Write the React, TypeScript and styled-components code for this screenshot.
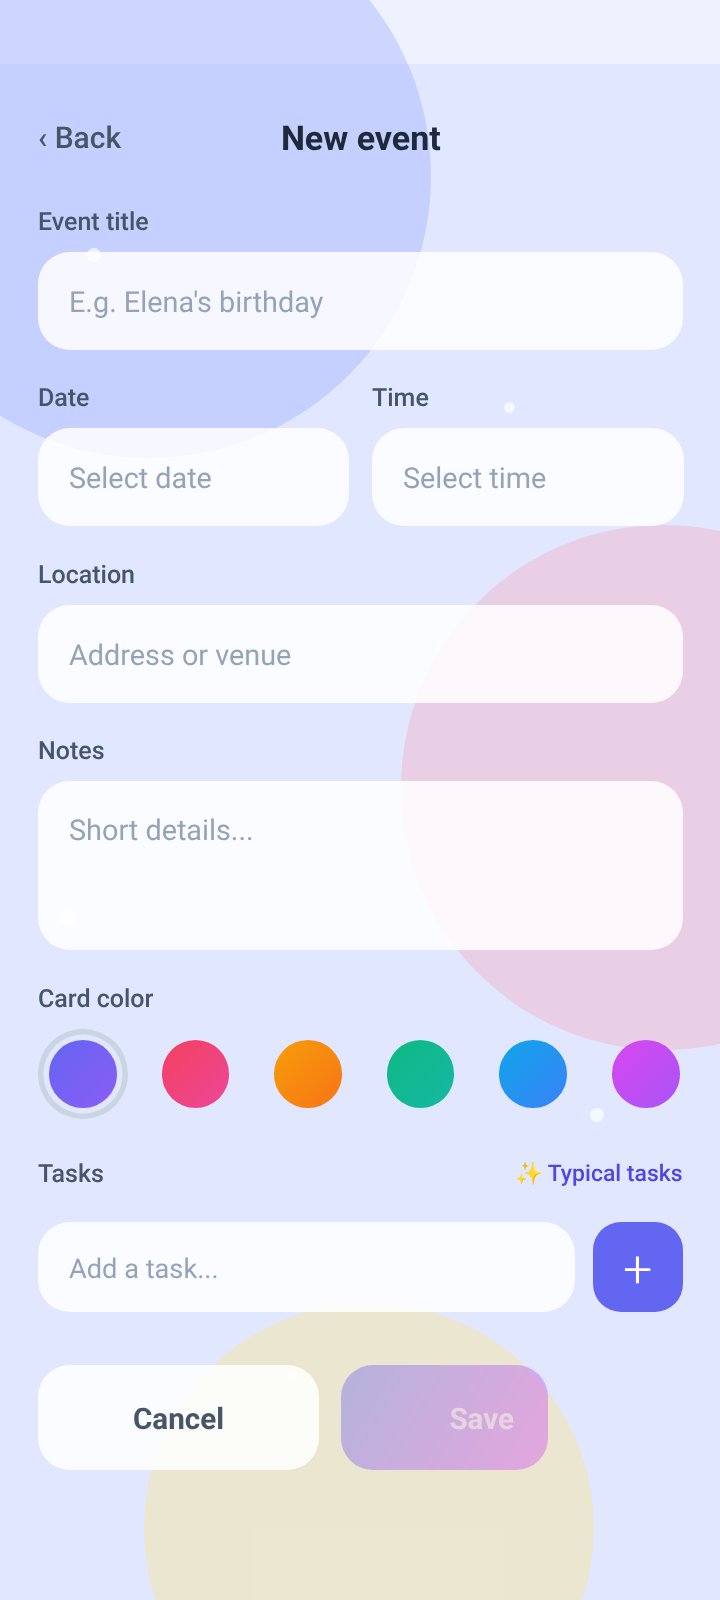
import React from "react";
import styled, { createGlobalStyle } from "styled-components";

const GlobalStyle = createGlobalStyle`
  * { box-sizing: border-box; }
  html, body { margin: 0; padding: 0; }
  body {
    font-family: Roboto, "Noto Sans", sans-serif;
    background: #e0e7ff;
    text-rendering: geometricPrecision;
  }
  button, input, textarea { text-rendering: geometricPrecision; }
`;

const Page = styled.div`
  position: relative;
  width: 720px;
  height: 1600px;
  overflow: hidden;
  background: #e0e7ff;
`;

const Blob = styled.div<{ $size: number; $left: number; $top: number; $color?: string }>`
  position: absolute;
  left: ${(p) => p.$left}px;
  top: ${(p) => p.$top}px;
  width: ${(p) => p.$size}px;
  height: ${(p) => p.$size}px;
  border-radius: 50%;
  background: ${(p) => p.$color};
`;

const Sparkle = styled(Blob)`
  background: rgba(255, 255, 255, 0.7);
  z-index: 2;
`;

const StatusBar = styled.div`
  height: 64px;
  background: rgba(255, 255, 255, 0.45);
`;

const Content = styled.div`
  position: relative;
  padding: 0 37.4px 0 38px;
  will-change: transform;
`;

const Header = styled.header`
  position: relative;
  height: 141px;
  display: flex;
  align-items: center;
  justify-content: center;
  padding: 8px 0 0 1px;
`;

const BackButton = styled.button`
  position: absolute;
  left: 0;
  top: 50%;
  transform: translateY(-50%);
  margin-top: 3px;
  padding: 0;
  border: 0;
  background: none;
  color: #475569;
  font: 500 30px Roboto, sans-serif;
`;

const Title = styled.h1`
  margin: 0;
  color: #1e293b;
  font: 700 34px Roboto, sans-serif;
`;

const Field = styled.div<{ $gap?: number }>`
  margin-bottom: ${(p) => p.$gap ?? 32}px;
`;

const Label = styled.label`
  display: block;
  height: 32px;
  margin-bottom: 15px;
  color: #475569;
  font: 500 25px/35px Roboto, sans-serif;
`;

const TextInput = styled.input`
  display: block;
  width: 100%;
  height: 98px;
  padding: 4px 31px 0;
  border: 0;
  border-radius: 32px;
  background: rgba(255, 255, 255, 0.85);
  color: #1e293b;
  font: 400 28.8px Roboto, sans-serif;
  outline: none;
  &::placeholder { color: #94a3b8; opacity: 1; }
`;

const NotesInput = styled.textarea`
  display: block;
  width: 100%;
  height: 169.6px;
  padding: 33px 31px;
  border: 0;
  border-radius: 32px;
  background: rgba(255, 255, 255, 0.85);
  font: 400 28.8px/34px Roboto, sans-serif;
  resize: none;
  outline: none;
  &::placeholder { color: #94a3b8; opacity: 1; }
`;

const TwoCols = styled.div`
  display: grid;
  grid-template-columns: 311px 312px;
  column-gap: 23px;
  width: 646px;
`;

const Swatches = styled.div`
  display: flex;
  gap: 45px;
  padding: 11px;
  margin-bottom: 38px;
`;

const Swatch = styled.button<{ $from: string; $to: string; $active?: boolean }>`
  flex: none;
  width: 67.6px;
  height: 67.6px;
  padding: 0;
  border: 0;
  border-radius: 50%;
  background: linear-gradient(135deg, ${(p) => p.$from}, ${(p) => p.$to});
  box-shadow: ${(p) => (p.$active ? "0 0 0 5.6px #e0e7ff, 0 0 0 11px #cbd5e1" : "none")};
`;

const TasksHead = styled.div`
  display: flex;
  justify-content: space-between;
  align-items: center;
  height: 32px;
  margin-bottom: 33px;
`;

const TasksLabel = styled(Label)`
  margin: 0;
`;

const TypicalLink = styled.a`
  padding-top: 3px;
  color: #4f46e5;
  font: 500 23px/32px Roboto, "Noto Color Emoji", sans-serif;
`;

const Emoji = styled.span`
  margin-right: 4.5px;
  font-size: 22.5px;
`;

const TaskRow = styled.div`
  display: flex;
  gap: 18px;
  margin-bottom: 53px;
`;

const TaskInput = styled(TextInput)`
  flex: 1;
  height: 90px;
  font-size: 27.2px;
`;

const AddButton = styled.button`
  flex: none;
  width: 90px;
  height: 90px;
  padding: 6px 0 0;
  border: 0;
  border-radius: 28px;
  background: #6366f1;
  color: #fff;
  font: 300 52px/84px Roboto, sans-serif;
`;

const Actions = styled.div`
  display: flex;
  gap: 22px;
`;

const CancelButton = styled.button`
  width: 281px;
  height: 105px;
  padding: 5px 0 0;
  border: 0;
  border-radius: 32px;
  background: rgba(255, 255, 255, 0.85);
  color: #475569;
  font: 700 29.6px Roboto, sans-serif;
`;

const SaveButton = styled.button`
  width: 207px;
  height: 105px;
  padding: 5px 34px 0 0;
  border: 0;
  border-radius: 32px;
  background: linear-gradient(120deg, #6366f1, #d946ef);
  opacity: 0.4;
  color: rgba(255, 255, 255, 0.6);
  text-align: right;
  font: 700 29.6px Roboto, sans-serif;
`;

const colors = [
  { from: "#6366f1", to: "#8b5cf6" },
  { from: "#f43f5e", to: "#ec4899" },
  { from: "#f59e0b", to: "#f97316" },
  { from: "#10b981", to: "#14b8a6" },
  { from: "#0ea5e9", to: "#3b82f6" },
  { from: "#d946ef", to: "#a855f7" },
];

export default function App() {
  return (
    <Page>
      <GlobalStyle />
      <StatusBar />
      <Blob $size={564} $left={-133} $top={-106} $color="rgba(165, 180, 252, 0.45)" />
      <Blob $size={525} $left={401} $top={525} $color="rgba(244, 172, 190, 0.4)" />
      <Blob $size={450} $left={144} $top={1303} $color="rgba(253, 230, 138, 0.4)" />
      <Content>
        <Header>
          <BackButton>‹ Back</BackButton>
          <Title>New event</Title>
        </Header>
        <Field $gap={30.6}>
          <Label>Event title</Label>
          <TextInput placeholder="E.g. Elena's birthday" />
        </Field>
        <TwoCols>
          <Field $gap={32.2}>
            <Label>Date</Label>
            <TextInput placeholder="Select date" />
          </Field>
          <Field $gap={32.2}>
            <Label>Time</Label>
            <TextInput placeholder="Select time" />
          </Field>
        </TwoCols>
        <Field $gap={31}>
          <Label>Location</Label>
          <TextInput placeholder="Address or venue" />
        </Field>
        <Field>
          <Label>Notes</Label>
          <NotesInput placeholder="Short details..." />
        </Field>
        <Label>Card color</Label>
        <Swatches>
          {colors.map((c, i) => (
            <Swatch key={c.from} $from={c.from} $to={c.to} $active={i === 0} />
          ))}
        </Swatches>
        <TasksHead>
          <TasksLabel>Tasks</TasksLabel>
          <TypicalLink>
            <Emoji>✨</Emoji>Typical tasks
          </TypicalLink>
        </TasksHead>
        <TaskRow>
          <TaskInput placeholder="Add a task..." />
          <AddButton>+</AddButton>
        </TaskRow>
        <Actions>
          <CancelButton>Cancel</CancelButton>
          <SaveButton>Save</SaveButton>
        </Actions>
      </Content>
      <Sparkle $size={14} $left={87} $top={248} />
      <Sparkle $size={11} $left={504} $top={402} />
      <Sparkle $size={16} $left={59} $top={910} />
      <Sparkle $size={14} $left={590} $top={1108} />
      <Sparkle $size={9} $left={288} $top={1370} />
    </Page>
  );
}
